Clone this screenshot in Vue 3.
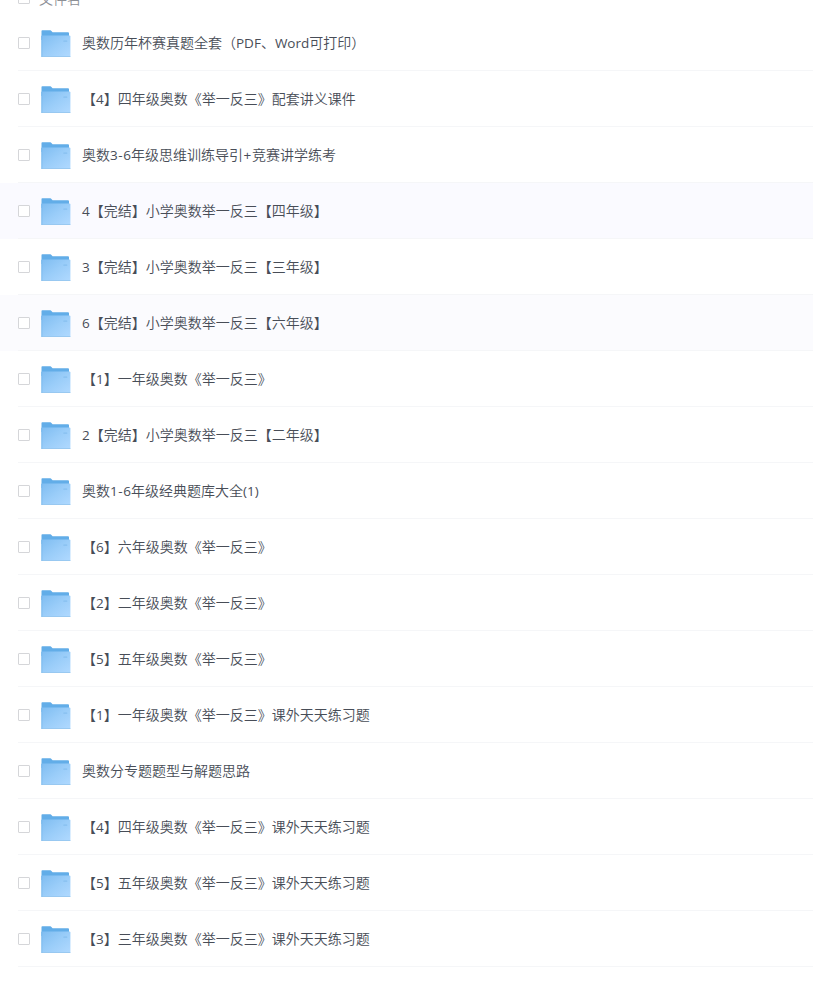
<script setup>
const rows = [
  { name: '奥数历年杯赛真题全套（PDF、Word可打印）' },
  { name: '【4】四年级奥数《举一反三》配套讲义课件' },
  { name: '奥数3-6年级思维训练导引+竞赛讲学练考' },
  { name: '4【完结】小学奥数举一反三【四年级】', state: 'selected' },
  { name: '3【完结】小学奥数举一反三【三年级】' },
  { name: '6【完结】小学奥数举一反三【六年级】', state: 'hovered' },
  { name: '【1】一年级奥数《举一反三》' },
  { name: '2【完结】小学奥数举一反三【二年级】' },
  { name: '奥数1-6年级经典题库大全(1)' },
  { name: '【6】六年级奥数《举一反三》' },
  { name: '【2】二年级奥数《举一反三》' },
  { name: '【5】五年级奥数《举一反三》' },
  { name: '【1】一年级奥数《举一反三》课外天天练习题' },
  { name: '奥数分专题题型与解题思路' },
  { name: '【4】四年级奥数《举一反三》课外天天练习题' },
  { name: '【5】五年级奥数《举一反三》课外天天练习题' },
  { name: '【3】三年级奥数《举一反三》课外天天练习题' },
]

// Splits a name into Latin, symbol and Chinese runs so each can have its own font and spacing.
const runs = (name) =>
  name.match(/[-+]|[\x20-\x2a\x2c\x2e-\x7e]+|[^\x20-\x7e]+/g).map((text) => ({
    text,
    latin: text.charCodeAt(0) < 128,
    symbol: text === '-' || text === '+',
  }))
</script>

<template>
  <main class="list">
    <svg class="defs" width="0" height="0" aria-hidden="true">
      <defs>
        <linearGradient id="folder-front" x1="0" y1="0" x2="1" y2="1">
          <stop offset="0" stop-color="#7fbdf1" />
          <stop offset="0.5" stop-color="#9acdf9" />
          <stop offset="1" stop-color="#b0d9ff" />
        </linearGradient>
      </defs>
    </svg>
    <header class="head">
      <span class="check"></span>
      <span class="title">文件名</span>
    </header>
    <div v-for="(row, i) in rows" :key="i" class="row" :class="row.state">
      <div class="line">
        <span class="check"></span>
        <svg class="folder" width="30" height="28" viewBox="0 0 30 28">
          <path d="M0.5 1Q0.5 0.3 1.2 0.3H9.3Q10 0.3 10.4 0.9L11.6 2.2H27Q28 2.2 28 3.2V10H0.5Z" fill="#62ade8" />
          <path d="M0.5 5.6H28.4Q29.4 5.6 29.4 6.6V26.8H0.5Z" fill="url(#folder-front)" />
          <path d="M0.5 26.5H29.4" stroke="#8fc3ee" stroke-width="0.8" />
          <path d="M0.8 6V26.8" stroke="#70b4eb" stroke-width="0.7" />
          <rect x="22.3" y="10.2" width="4" height="1.8" rx="0.6" fill="#8cc3f2" />
        </svg>
        <span class="name"><span v-for="(run, j) in runs(row.name)" :key="j" :class="{ latin: run.latin, symbol: run.symbol }">{{ run.text }}</span></span>
      </div>
    </div>
  </main>
</template>

<style>
body {
  background: #fff;
}
</style>

<style scoped>
.list {
  height: 984px;
  overflow: hidden;
  font-family: "Noto Sans CJK SC", sans-serif;
  font-size: 14px;
  font-weight: 350;
  color: #484d57;
  text-spacing-trim: space-all;
}
.defs {
  display: block;
}
.head {
  display: flex;
  align-items: center;
  height: 34px;
  margin-top: -19px;
  padding-left: 18px;
  box-sizing: border-box;
  color: #8d9096;
}
.title {
  margin-left: 9px;
  padding-bottom: 1px;
  line-height: 20px;
}
.row {
  height: 56px;
  padding-left: 18px;
}
.row.selected {
  background: #fafaff;
}
.row.hovered {
  background: #fbfbfe;
}
.line {
  display: flex;
  align-items: center;
  height: 56px;
  box-sizing: border-box;
  border-bottom: 1px solid #f5f6f8;
}
.check {
  flex: none;
  width: 12px;
  height: 12px;
  box-sizing: border-box;
  border: 1px solid #d5d6d9;
  border-radius: 1px;
  background: #fff;
}
.folder {
  flex: none;
  margin-left: 11px;
  padding-top: 2px;
}
.name {
  margin-left: 11px;
  padding-bottom: 1px;
  line-height: 20px;
  white-space: nowrap;
}
.latin {
  font-family: "Open Sans", "Noto Sans", sans-serif;
  font-size: 13.5px;
  font-weight: 400;
  line-height: 0;
}
.symbol {
  margin: 0 0.6px;
}
</style>
